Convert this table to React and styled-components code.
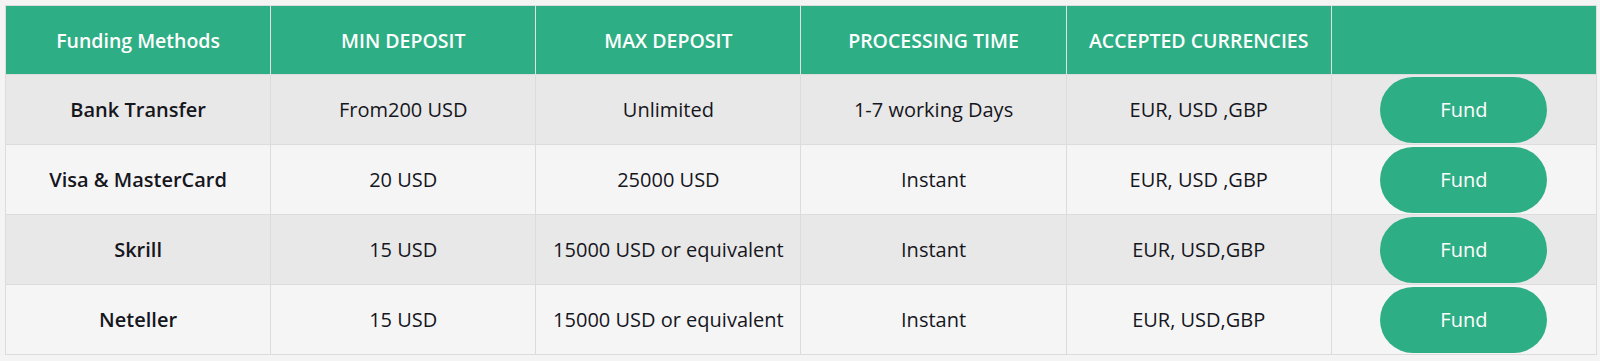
import React from 'react';
import styled, { createGlobalStyle } from 'styled-components';

const GlobalStyle = createGlobalStyle`
  body {
    margin: 0;
    background: #f4f4f4;
    font-family: 'Open Sans', 'Liberation Sans', sans-serif;
  }
`;

const colors = {
  green: '#2eae84',
  text: '#16161d',
  rowOdd: '#e8e8e8',
  rowEven: '#f5f5f5',
  border: '#dcdcdc',
};

const methods = [
  { name: 'Bank Transfer', min: 'From200 USD', max: 'Unlimited', time: '1-7 working Days', currencies: 'EUR, USD ,GBP' },
  { name: 'Visa & MasterCard', min: '20 USD', max: '25000 USD', time: 'Instant', currencies: 'EUR, USD ,GBP' },
  { name: 'Skrill', min: '15 USD', max: '15000 USD or equivalent', time: 'Instant', currencies: 'EUR, USD,GBP' },
  { name: 'Neteller', min: '15 USD', max: '15000 USD or equivalent', time: 'Instant', currencies: 'EUR, USD,GBP' },
];

const Wrapper = styled.div`
  padding: 5px 3px 8px 5px;
`;

const Table = styled.table`
  width: 1592px;
  border-collapse: collapse;
  table-layout: fixed;
  border: 1px solid ${colors.border};
`;

const HeadCell = styled.th`
  height: 68px;
  padding: 0 6px;
  background: ${colors.green};
  color: #fff;
  font-size: 19.5px;
  font-weight: 600;
  text-align: center;
  border-left: 1px solid #e2e2e2;
  white-space: nowrap;

  &:first-child {
    border-left: none;
  }
`;

const Row = styled.tr`
  background: ${({ odd }) => (odd ? colors.rowOdd : colors.rowEven)};
`;

const Cell = styled.td`
  height: 69px;
  padding: 0 6px;
  text-align: center;
  color: ${colors.text};
  font-size: 20px;
  font-weight: ${({ strong }) => (strong ? 600 : 400)};
  border: 1px solid ${colors.border};
  white-space: nowrap;
`;

const FundButton = styled.button`
  width: 167px;
  height: 66px;
  border: none;
  border-radius: 33px;
  background: ${colors.green};
  color: #fff;
  font-family: inherit;
  font-size: 20px;
  font-weight: 400;
  cursor: pointer;
  vertical-align: middle;
`;

const headers = [
  'Funding Methods',
  'MIN DEPOSIT',
  'MAX DEPOSIT',
  'PROCESSING TIME',
  'ACCEPTED CURRENCIES',
  '',
];

export default function App() {
  return (
    <Wrapper>
      <GlobalStyle />
      <Table>
        <thead>
          <tr>
            {headers.map((h, i) => (
              <HeadCell key={i}>{h}</HeadCell>
            ))}
          </tr>
        </thead>
        <tbody>
          {methods.map((m, i) => (
            <Row key={m.name} odd={i % 2 === 0}>
              <Cell strong>{m.name}</Cell>
              <Cell>{m.min}</Cell>
              <Cell>{m.max}</Cell>
              <Cell>{m.time}</Cell>
              <Cell>{m.currencies}</Cell>
              <Cell>
                <FundButton>Fund</FundButton>
              </Cell>
            </Row>
          ))}
        </tbody>
      </Table>
    </Wrapper>
  );
}
